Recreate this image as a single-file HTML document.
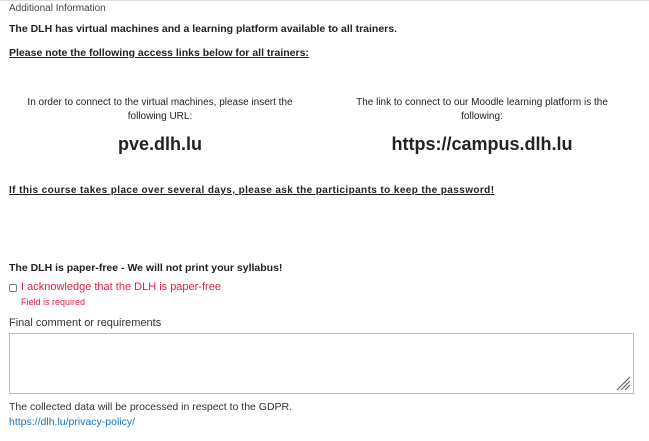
<!DOCTYPE html>
<html><head><style>
body{margin:0;width:649px;height:441px;background:#fff;font-family:"Liberation Sans",sans-serif;color:#222;position:relative;overflow:hidden}
.a{position:absolute;white-space:nowrap;line-height:1}
.c{text-align:center}
</style></head><body>
<div style="position:absolute;left:0;top:0;width:649px;height:1px;background:#ddd"></div>
<div class="a" style="left:9px;top:4px;font-size:10px;color:#444">Additional Information</div>
<div class="a" style="left:9px;top:24px;font-size:10.5px;font-weight:bold">The DLH has virtual machines and a learning platform available to all trainers.</div>
<div class="a" style="left:9px;top:48px;font-size:10.5px;font-weight:bold;text-decoration:underline">Please note the following access links below for all trainers:</div>
<div class="a c" style="left:10px;width:300px;top:96px;font-size:10px;line-height:14px;white-space:normal">In order to connect to the virtual machines, please insert the following URL:</div>
<div class="a c" style="left:342px;width:280px;top:96px;font-size:10px;line-height:14px;white-space:normal">The link to connect to our Moodle learning platform is the following:</div>
<div class="a c" style="left:10px;width:300px;top:135px;font-size:18px;font-weight:bold">pve.dlh.lu</div>
<div class="a c" style="left:332px;width:300px;top:135px;font-size:18px;font-weight:bold">https://campus.dlh.lu</div>
<div class="a" style="left:9px;top:186px;font-size:10px;font-weight:bold;letter-spacing:0.4px;text-decoration:underline">If this course takes place over several days, please ask the participants to keep the password<span style="text-decoration:none">!</span></div>
<div class="a" style="left:9px;top:263px;font-size:10.5px;font-weight:bold">The DLH is paper-free - We will not print your syllabus!</div>
<div style="position:absolute;left:9px;top:284px;width:6px;height:6px;border:1px solid #777;border-radius:2px"></div>
<div class="a" style="left:21px;top:282px;font-size:11px;color:#e0204a">I acknowledge that the DLH is paper-free</div>
<div class="a" style="left:21px;top:298px;font-size:9px;color:#e0204a">Field is required</div>
<div class="a" style="left:9px;top:318px;font-size:11px;color:#333">Final comment or requirements</div>
<div style="position:absolute;left:9px;top:333px;width:623px;height:59px;border:1px solid #bbb"></div>
<svg style="position:absolute;left:615px;top:375px" width="16" height="16"><path d="M2 15L15 2M6 15L15 6M10 15L15 10" stroke="#666" stroke-width="1.2"/></svg>
<div class="a" style="left:9px;top:402px;font-size:10.5px;color:#333">The collected data will be processed in respect to the GDPR.</div>
<div class="a" style="left:9px;top:417px;font-size:10.5px;color:#1a73b8">https://dlh.lu/privacy-policy/</div>
</body></html>
